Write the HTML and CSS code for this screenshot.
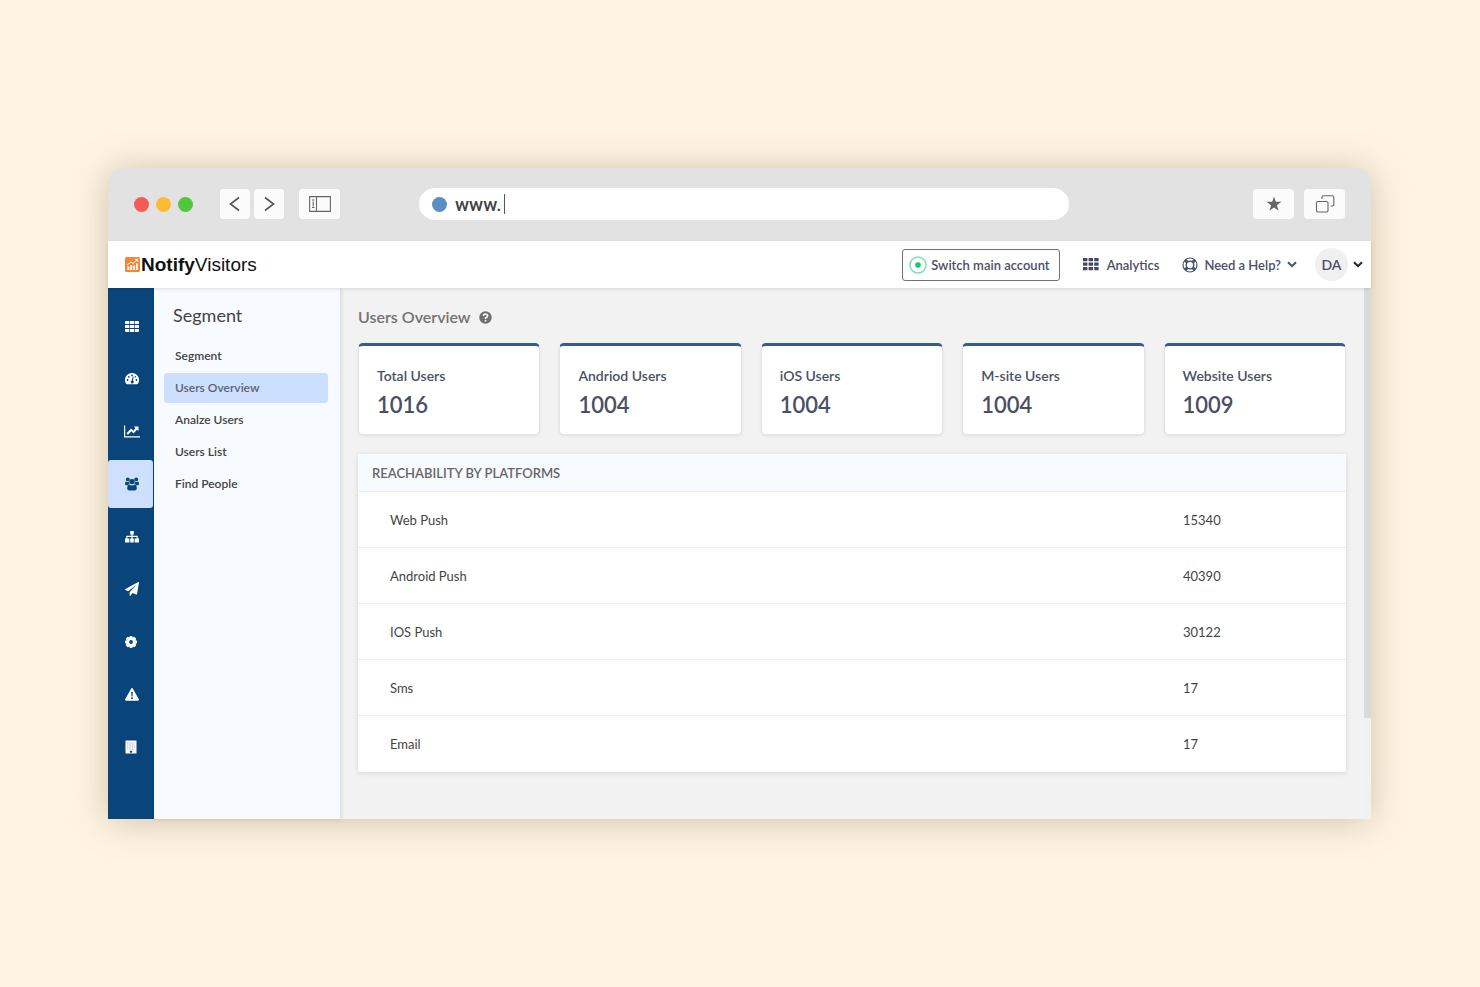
FILE: index.html
```html
<!DOCTYPE html>
<html lang="en">
<head>
    <meta charset="UTF-8">
    <meta name="viewport" content="width=device-width, initial-scale=1.0">
    <title>NotifyVisitors - Users Overview</title>
    <link rel="stylesheet" href="styles.css">
</head>
<body>

<div class="window">

    <!-- Browser toolbar -->
    <div class="toolbar">
        <div class="dots">
            <span class="dot red"></span>
            <span class="dot yellow"></span>
            <span class="dot green"></span>
        </div>
        <div class="history">
            <button type="button" class="tool-btn" aria-label="Back">
                <svg width="12" height="16" viewBox="0 0 12 16"><path d="M10 1.500 1.500 8l8.500 6.500" /></svg>
            </button>
            <button type="button" class="tool-btn" aria-label="Forward">
                <svg width="12" height="16" viewBox="0 0 12 16"><path d="M2 1.500 10.500 8l-8.500 6.500" /></svg>
            </button>
        </div>
        <button type="button" class="tool-btn wide" aria-label="Toggle sidebar">
            <svg class="thin" width="22" height="16" viewBox="0 0 22 16">
                <path d="M.6.6h20.800v14.800H.6zM7.500.6v14.800M3 4h2.500M3 11.500h2.500M4.200 5.500v5" />
            </svg>
        </button>
        <div class="address">
            <span class="site-dot"></span>
            <input type="text" class="url" value="www." aria-label="Address">
            <span class="caret"></span>
        </div>
        <div class="toolbar-right">
            <button type="button" class="tool-btn wide" aria-label="Bookmark">
                <svg class="solid" width="16" height="16" viewBox="0 0 16 16"><path d="m8 .5 1.800 5.300h5.700L10.900 9.200l1.700 5.600L8 11.400l-4.600 3.400 1.700-5.600L.5 5.800h5.700z" /></svg>
            </button>
            <button type="button" class="tool-btn wide" aria-label="Tabs">
                <svg class="thin" width="20" height="20" viewBox="0 0 20 20">
                    <rect x="1.500" y="7.500" width="11.500" height="10.500" rx="1.500" />
                    <path d="M7 5V3.200q0-1.500 1.500-1.500h8.800q1.500 0 1.500 1.500v7.300q0 1.500-1.500 1.500H15.500" />
                </svg>
            </button>
        </div>
    </div>

    <!-- App header -->
    <header class="header">
        <a href="#" class="logo">
            <svg width="15" height="15" viewBox="0 0 15 15">
                <rect width="15" height="15" rx="1.500" fill="#f58634" />
                <path fill="#fff" d="M2.300 9.500h2v3.500h-2zM5.200 8h2v5h-2zM8.100 8.500h2V13h-2zM11 6.500h1.800V13H11z" />
                <path fill="none" stroke="#fff" d="m2 8 4-3 2 1.500L12.500 2.500M10 2.300h2.700V5" />
            </svg>
            <span><b>Notify</b>Visitors</span>
        </a>
        <div class="header-right">
            <button type="button" class="switch-btn">
                <svg width="18" height="18" viewBox="0 0 18 18">
                    <circle cx="9" cy="9" r="8" fill="none" stroke="#7be0b2" stroke-width="1.500" />
                    <circle cx="9" cy="9" r="2.800" fill="#0fca72" />
                </svg>
                Switch main account
            </button>
            <a href="#" class="header-link analytics">
                <svg width="16" height="13" viewBox="0 0 16 13"><path fill="#3f4a62" d="M0 0h4.400v3.300H0zM5.600 0H10v3.300H5.600zM11.200 0h4.400v3.300h-4.400zM0 4.500h4.400v3.300H0zM5.600 4.500H10v3.300H5.600zM11.200 4.500h4.400v3.300h-4.400zM0 9h4.400v3.300H0zM5.600 9H10v3.300H5.600zM11.200 9h4.400v3.300h-4.400z" /></svg>
                Analytics
            </a>
            <a href="#" class="header-link help">
                <svg width="16" height="16" viewBox="0 0 16 16">
                    <g fill="none" stroke="#4a566d">
                        <circle cx="8" cy="8" r="7" stroke-width="1.200" />
                        <circle cx="8" cy="8" r="3.800" stroke-width="1.400" />
                        <path stroke-width="3" d="m2.900 2.900 2.600 2.600M13.100 2.900l-2.600 2.600M2.900 13.100l2.600-2.600M13.100 13.100l-2.600-2.600" />
                    </g>
                </svg>
                Need a Help?
                <svg class="chevron" width="10" height="7" viewBox="0 0 10 7"><path d="m1 1.200 4 4 4-4" /></svg>
            </a>
            <button type="button" class="account" aria-label="Account menu">
                <span class="avatar">DA</span>
                <svg class="chevron dark" width="10" height="7" viewBox="0 0 10 7"><path d="m1 1.200 4 4 4-4" /></svg>
            </button>
        </div>
    </header>

    <div class="app">

        <!-- Icon rail -->
        <nav class="rail" aria-label="Modules">
            <a href="#" aria-label="Dashboard">
                <svg width="14" height="11" viewBox="0 0 14 11"><path d="M0 1q0-1 1-1h3.200v3H0zM4.900 0h4.200v3H4.900zM9.800 0H13q1 0 1 1v2H9.800zM0 4h4.200v3H0zM4.900 4h4.200v3H4.900zM9.800 4H14v3H9.800zM0 8h4.200v3H1q-1 0-1-1zM4.900 8h4.200v3H4.900zM9.800 8H14v2q0 1-1 1H9.800z" /></svg>
            </a>
            <a href="#" aria-label="Performance">
                <svg width="14" height="12" viewBox="0 0 14 12">
                    <path d="M7 0a7 7 0 0 1 6 10.600q-.4.700-1 .7H2q-.6 0-1-.7A7 7 0 0 1 7 0z" />
                    <g fill="#09447a"><circle cx="2.500" cy="7" r=".9" /><circle cx="3.800" cy="3.800" r=".9" /><circle cx="7" cy="2.400" r=".9" /><circle cx="11.500" cy="7" r=".9" /><circle cx="10.400" cy="3.800" r=".8" /><path d="m7.700 3.500.9.200-.5 4a1.500 1.500 0 1 1-1.200-.2z" /></g>
                </svg>
            </a>
            <a href="#" aria-label="Reports">
                <svg width="16" height="13" viewBox="0 0 16 13"><path d="M0 .5h1.200v10.800H16v1.200H0z" /><path d="M9.700 1.500h4.800v4.600L13 4.800 9.600 8.500 7.200 6.200 4 9.800 2.500 8.300l4.600-4.800 2.500 2.300L11.300 3z" /></svg>
            </a>
            <a href="#" class="active" aria-label="Segment">
                <svg width="14" height="14" viewBox="0 0 14 14"><circle cx="2.800" cy="2.400" r="1.900" /><circle cx="11.200" cy="2.400" r="1.900" /><circle cx="7" cy="4.600" r="2.700" /><path d="M1.300 4.600q1.500 1 2.600.1 0 1.300.8 2.400-1.500.1-2.300 1.100H1.200Q0 8.200 0 7q0-2.200 1.300-2.400zM12.700 4.600q-1.500 1-2.600.1 0 1.300-.8 2.400 1.500.1 2.300 1.100h1.200Q14 8.200 14 7q0-2.200-1.300-2.400zM4.300 7.600Q7 9.600 9.700 7.600q2.100.2 2.100 3.900 0 2-2 2H4.200q-2 0-2-2 0-3.700 2.100-3.900z" /></svg>
            </a>
            <a href="#" aria-label="Journeys">
                <svg width="14" height="12" viewBox="0 0 14 12"><path d="M5.200 0h3.600v3.400H7.600v1.400h4.600q.6 0 .6.600v2.200H14V11.500H9.600V7.600h2V6h-4v1.600h1.200v3.900H5.200V7.600h1.200V6h-4v1.600h2v3.900H0V7.600h1.200V5.400q0-.6.6-.6h4.600V3.400H5.200z" /></svg>
            </a>
            <a href="#" aria-label="Campaigns">
                <svg width="14" height="14" viewBox="0 0 14 14"><path d="M13.300.1q.8-.2.700.7l-2 11.200q-.2.800-.9.500L7.500 11 5.600 13.600q-.7.600-1-.2v-3.200L11.500 2.800 3.200 9.300.4 8q-.8-.5 0-1z" /></svg>
            </a>
            <a href="#" class="settings" aria-label="Settings">
                <svg width="12" height="12" viewBox="0 0 14 14">
                    <path fill-rule="evenodd" d="M5.600 0h2.800l.6 1.700L10.900.9l2.200 2.200L12.300 5l1.700.6v2.800l-1.700.6.800 1.900-2.200 2.200-1.900-.8L8.400 14H5.600L5 12.300l-1.900.8-2.200-2.200L1.700 9 0 8.400V5.600L1.700 5 .9 3.100 3.100.9 5 1.700zM7 4.800a2.200 2.200 0 1 0 0 4.400 2.200 2.200 0 0 0 0-4.400z" />
                </svg>
            </a>
            <a href="#" aria-label="Alerts">
                <svg width="14" height="13" viewBox="0 0 14 13"><path d="M6.200.5q.8-1 1.600 0l6 10.800q.4 1.200-.8 1.400H1q-1.200-.2-.8-1.400z" /><path fill="#09447a" d="M6.200 4h1.600l-.3 4.400h-1zM6.200 9.300h1.600v1.600H6.200z" /></svg>
            </a>
            <a href="#" class="settings" aria-label="Company">
                <svg width="12" height="14" viewBox="0 0 12 14"><path d="M.5.500h11v13H.5z" /><path fill="none" stroke="#c3d0de" stroke-width=".8" d="M2.600 2v8M4.200 2v8M5.800 2v8M7.400 2v8M9 2v8" /><path fill="#09447a" d="M4.900 10.800h2.200v1.900H4.900z" /></svg>
            </a>
        </nav>

        <!-- Section menu -->
        <aside class="sidebar">
            <h2>Segment</h2>
            <nav class="menu">
                <a href="#">Segment</a>
                <a href="#" class="active">Users Overview</a>
                <a href="#">Analze Users</a>
                <a href="#">Users List</a>
                <a href="#">Find People</a>
            </nav>
        </aside>

        <main class="content">
            <h1>
                Users Overview
                <svg width="13" height="13" viewBox="0 0 13 13">
                    <circle cx="6.500" cy="6.500" r="6.200" fill="#6f6f6f" />
                    <path fill="none" stroke="#f2f2f2" stroke-width="1.700" d="M4.300 4.900Q4.500 3.200 6.500 3.200T8.600 4.900Q8.600 6 6.600 7v1" />
                    <path fill="#f2f2f2" d="M5.700 8.900h1.700v1.600H5.700z" />
                </svg>
            </h1>

            <div class="cards">
                <div class="card"><h3>Total Users</h3><p>1016</p></div>
                <div class="card"><h3>Andriod Users</h3><p>1004</p></div>
                <div class="card"><h3>iOS Users</h3><p>1004</p></div>
                <div class="card"><h3>M-site Users</h3><p>1004</p></div>
                <div class="card"><h3>Website Users</h3><p>1009</p></div>
            </div>

            <table class="reach">
                <thead>
                    <tr><th colspan="2">REACHABILITY BY PLATFORMS</th></tr>
                </thead>
                <tbody>
                    <tr><td>Web Push</td><td class="count">15340</td></tr>
                    <tr><td>Android Push</td><td class="count">40390</td></tr>
                    <tr><td>IOS Push</td><td class="count">30122</td></tr>
                    <tr><td>Sms</td><td class="count">17</td></tr>
                    <tr><td>Email</td><td class="count">17</td></tr>
                </tbody>
            </table>
        </main>

        <div class="scrollbar"><div class="thumb"></div></div>
    </div>
</div>

</body>
</html>
```
FILE: styles.css
```css
* {
    box-sizing: border-box;
}
body {
    margin: 0;
    padding: 168px 109px 168px 108px;
    background-color: #fff4e3;
    font-family: Lato, "Liberation Sans", sans-serif;
    font-size: 13px;
    color: #444;
}
h1, h2, h3, p {
    margin: 0;
}
a {
    color: inherit;
    text-decoration: none;
}
button {
    font-family: inherit;
    cursor: pointer;
}
svg {
    display: block;
    flex-shrink: 0;
}
.window {
    border-radius: 14px 14px 0 0;
    box-shadow: 0 2px 36px rgba(110, 100, 60, 0.34);
}

/* Browser toolbar */
.toolbar {
    display: flex;
    align-items: center;
    height: 73px;
    padding: 0 26px 1px;
    background-color: #e2e2e2;
    border-radius: 14px 14px 0 0;
}
.dots {
    display: flex;
    gap: 7px;
    margin-right: 27px;
}
.dot, .site-dot {
    width: 15px;
    height: 15px;
    border-radius: 50%;
}
.red {
    background-color: #f55b55;
}
.yellow {
    background-color: #fdbb32;
}
.green {
    background-color: #4fc83c;
}
.history {
    display: flex;
    gap: 4px;
    margin-right: 15px;
}
.tool-btn {
    display: flex;
    align-items: center;
    justify-content: center;
    width: 30px;
    height: 30px;
    padding: 0;
    border: none;
    border-radius: 4px;
    background-color: #fbfbfb;
}
.tool-btn.wide {
    width: 41px;
}
.tool-btn svg {
    fill: none;
    stroke: #555;
    stroke-width: 1.6;
}
.tool-btn .thin {
    stroke: #666;
    stroke-width: 1.1;
}
.tool-btn .solid {
    fill: #666;
    stroke: none;
}
.address {
    flex: 1;
    display: flex;
    align-items: center;
    height: 32px;
    margin-left: 79px;
    padding: 0 13px;
    border-radius: 16px;
    background-color: #fff;
}
.site-dot {
    background-color: #5b8fc3;
}
.url {
    width: 49px;
    margin-left: 8px;
    padding: 0;
    border: none;
    outline: none;
    background: none;
    font-family: Roboto, sans-serif;
    font-size: 19px;
    font-weight: 500;
    color: #444;
}
.caret {
    width: 1px;
    height: 20px;
    background-color: #555;
}
.toolbar-right {
    display: flex;
    gap: 10px;
    margin-left: 184px;
}

/* App header */
.header {
    position: relative;
    display: flex;
    align-items: center;
    justify-content: space-between;
    height: 47px;
    padding: 0 8px 0 17px;
    background-color: #fff;
    box-shadow: 0 1px 3px rgba(0, 0, 0, 0.12);
}
.logo {
    display: flex;
    align-items: center;
    gap: 1px;
    font-family: "Liberation Sans", Arial, sans-serif;
    font-size: 19px;
    color: #111;
}
.header-right {
    display: flex;
    align-items: center;
    font-weight: 600;
    color: #4a4f66;
}
.switch-btn {
    display: flex;
    align-items: center;
    gap: 4px;
    height: 32px;
    padding: 0 9px 0 6px;
    border: 1px solid #6b7085;
    border-radius: 3px;
    background-color: #fff;
    font-size: 13px;
    font-weight: 600;
    color: #4a4f66;
}
.header-link {
    display: flex;
    align-items: center;
    gap: 8px;
}
.analytics {
    margin-left: 23px;
}
.help {
    margin-left: 23px;
    gap: 6px;
}
.chevron {
    fill: none;
    stroke: #4a4f66;
    stroke-width: 2;
}
.chevron.dark {
    stroke: #222;
}
.account {
    display: flex;
    align-items: center;
    gap: 5px;
    margin-left: 18px;
    padding: 0;
    border: none;
    background: none;
}
.avatar {
    width: 33px;
    height: 33px;
    border-radius: 50%;
    background-color: #f0f0f0;
    font-size: 14px;
    font-weight: 600;
    line-height: 33px;
    text-align: center;
    color: #4a4f66;
}

.app {
    display: flex;
    background-color: #f2f2f2;
}

/* Icon rail */
.rail {
    display: flex;
    flex-direction: column;
    justify-content: space-between;
    width: 46px;
    padding: 14px 0 48px;
    background-color: #09447a;
}
.rail a {
    display: flex;
    align-items: center;
    justify-content: center;
    height: 48px;
    margin-right: 1px;
    padding-left: 3px;
    border-radius: 3px;
}
.rail .settings {
    padding-left: 0;
}
.rail svg {
    fill: #fff;
}
.rail .active {
    background-color: #cfe0ff;
}
.rail .active svg {
    fill: #09447a;
}

/* Section menu */
.sidebar {
    width: 186px;
    padding: 15px 12px 0 10px;
    background-color: #f7faff;
    box-shadow: 1px 0 4px rgba(0, 0, 0, 0.14);
}
.sidebar h2 {
    margin: 0 0 14px 9px;
    font-size: 18px;
    font-weight: 400;
    line-height: 24px;
}
.menu {
    display: flex;
    flex-direction: column;
    gap: 2px;
}
.menu a {
    height: 30px;
    padding-left: 11px;
    border-radius: 4px;
    font-size: 12px;
    font-weight: 600;
    line-height: 30px;
}
.menu .active {
    background-color: #cddfff;
    color: #5b6275;
}

/* Main content */
.content {
    flex: 1;
    padding: 18px 18px 47px;
}
.content h1 {
    display: flex;
    align-items: center;
    gap: 8px;
    margin-bottom: 15px;
    font-size: 16px;
    font-weight: 600;
    line-height: 22px;
    color: #737373;
}
.cards {
    display: grid;
    grid-template-columns: repeat(5, 1fr);
    gap: 19px;
    margin-bottom: 19px;
}
.card {
    padding: 19px 18px 15px;
    border: 1px solid #e3e5ec;
    border-top: 3px solid #355d92;
    border-radius: 5px;
    background-color: #fff;
    box-shadow: 0 1px 3px rgba(0, 0, 0, 0.08);
    color: #4a5064;
}
.card h3 {
    font-size: 14px;
    font-weight: 600;
    line-height: 22px;
}
.card p {
    margin-top: 4px;
    font-size: 22px;
    font-weight: 600;
    line-height: 28px;
}
.reach {
    width: 100%;
    border-spacing: 0;
    border-radius: 3px;
    background-color: #fff;
    box-shadow: 0 1px 5px rgba(0, 0, 0, 0.12);
}
.reach th {
    height: 38px;
    padding: 0 14px;
    border-bottom: 1px solid #e9edf2;
    background-color: #f7faff;
    font-size: 13px;
    font-weight: 600;
    text-align: left;
    color: #666;
}
.reach td {
    height: 56px;
    padding: 0 0 0 32px;
    border-bottom: 1px solid #ececec;
}
.reach tr:last-child td {
    border-bottom: none;
}
.reach .count {
    width: 163px;
    padding-left: 0;
}
.scrollbar {
    width: 7px;
    background-color: #eff1f4;
}
.thumb {
    height: 81%;
    background-color: #d9dadd;
}
```
